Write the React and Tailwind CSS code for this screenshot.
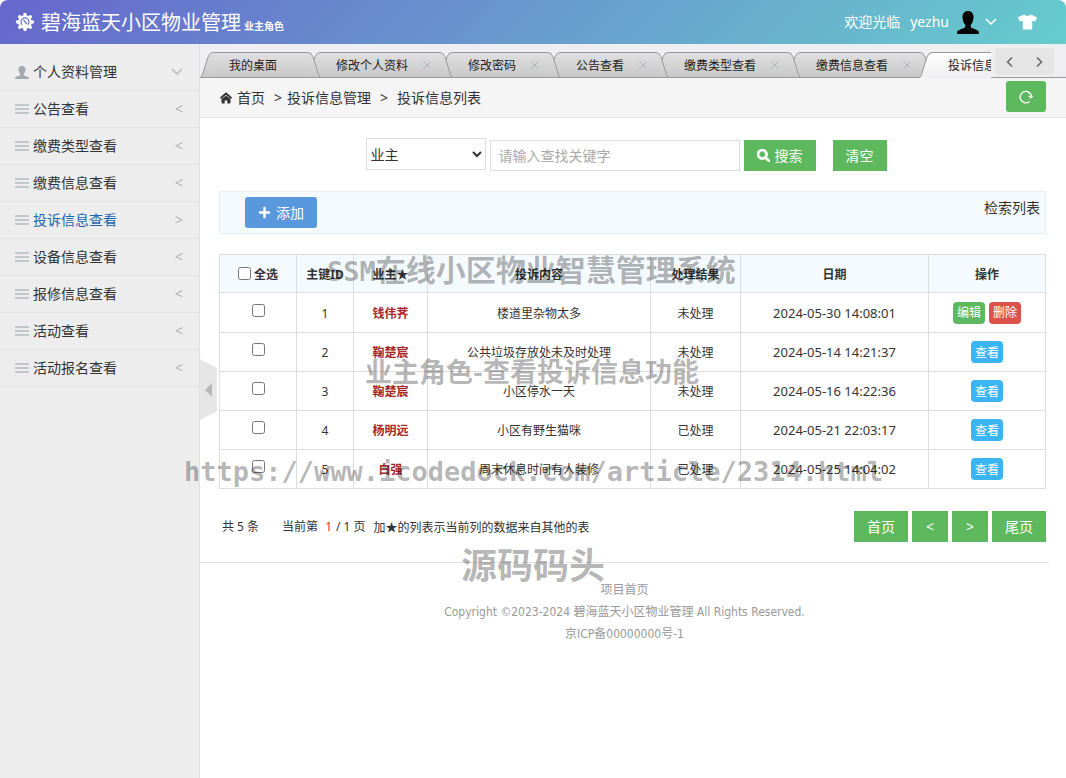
import { FaPlus, FaSearch, FaTshirt } from "react-icons/fa";

const menus = [
    { name: "公告查看" },
    { name: "缴费类型查看" },
    { name: "缴费信息查看" },
    { name: "投诉信息查看", active: true },
    { name: "设备信息查看" },
    { name: "报修信息查看" },
    { name: "活动查看" },
    { name: "活动报名查看" },
];

const tabs = [
    { name: "我的桌面", fixed: true, z: "z-[7]" },
    { name: "修改个人资料", z: "z-[6]" },
    { name: "修改密码", z: "z-[5]" },
    { name: "公告查看", z: "z-[4]" },
    { name: "缴费类型查看", z: "z-[3]" },
    { name: "缴费信息查看", z: "z-[2]" },
    { name: "投诉信息查看", active: true, z: "z-[8]" },
];

const rows = [
    { id: 1, owner: "钱伟荠", content: "楼道里杂物太多", result: "未处理", date: "2024-05-30 14:08:01", own: true },
    { id: 2, owner: "鞠楚宸", content: "公共垃圾存放处未及时处理", result: "未处理", date: "2024-05-14 14:21:37" },
    { id: 3, owner: "鞠楚宸", content: "小区停水一天", result: "未处理", date: "2024-05-16 14:22:36" },
    { id: 4, owner: "杨明远", content: "小区有野生猫咪", result: "已处理", date: "2024-05-21 22:03:17" },
    { id: 5, owner: "白强", content: "周末休息时间有人装修", result: "已处理", date: "2024-05-25 14:04:02" },
];

function GearIcon() {
    return (
        <svg className="h-5 w-5" viewBox="0 0 20 20">
            <g stroke="#fff" strokeWidth="3.4" strokeLinecap="round">
                <path d="M10 2.500v15M2.500 10h15M4.700 4.700l10.600 10.600M15.300 4.700L4.700 15.300" />
            </g>
            <circle cx="10" cy="10" r="6.8" fill="#fff" />
            <path d="M7.200 12.800A4 4 0 1 1 12.800 12.800" fill="none" stroke="#6b74cb" strokeWidth="1.200" />
            <path d="M8.500 8l3.500 4" stroke="#6b74cb" strokeWidth="1.400" />
        </svg>
    );
}

function PersonIcon({ className }) {
    return (
        <svg className={className} viewBox="0 0 22 22" fill="currentColor" preserveAspectRatio="none">
            <path d="M11 0C7.6 0 5.3 2.4 5.5 6c.1 3.400 1.200 5.800 2.700 7.200.5 1.600-.2 2.800-1.700 3.400C3.600 17.600 0 18.300 0 21c0 .7.500 1 1.200 1h19.600c.7 0 1.200-.3 1.200-1 0-2.700-3.600-3.400-6.500-4.400-1.500-.6-2.200-1.800-1.700-3.400 1.500-1.400 2.600-3.800 2.700-7.200C16.700 2.400 14.400 0 11 0z" />
        </svg>
    );
}

function Chevron({ className, d }) {
    return (
        <svg className={className} viewBox="0 0 12 12" fill="none" stroke="currentColor" strokeWidth="1.5">
            <path d={d} />
        </svg>
    );
}

function Star() {
    return <span className="font-['Noto_Sans_CJK_SC',sans-serif]">★</span>;
}

function Tab({ name, fixed, active, z }) {
    const top = active ? "#ffffff" : "#e0e0e0";
    const bottom = active ? "#efeef0" : "#c8c8c8";
    const gradient = `tab-${active ? "on" : "off"}`;
    return (
        <li className={`relative flex h-[26px] shrink-0 items-center pl-[21px] ${fixed ? "pr-[38px]" : "pr-4"} ${z}`}>
            <span className="absolute inset-y-0 -left-2 -right-[6px] flex">
                <svg className="h-[26px] w-4 shrink-0" viewBox="0 0 16 26">
                    <defs>
                        <linearGradient id={gradient} x1="0" y1="0" x2="0" y2="1">
                            <stop offset="0" stopColor={top} />
                            <stop offset="1" stopColor={bottom} />
                        </linearGradient>
                    </defs>
                    <path d="M0 26C2 25 2 24 3 21L8 5Q9.500.5 13 .5H16V26z" fill={`url(#${gradient})`} />
                    <path d="M0 25.500C2 25 2 24 3 21L8 5Q9.500.5 13 .5H16" fill="none" stroke="#999" />
                    {!active && <path d="M0 25.500h16" stroke="#999" />}
                </svg>
                <span
                    className={`h-[26px] flex-1 border-t border-[#999] bg-linear-to-b ${
                        active ? "from-white to-[#efeef0]" : "border-b from-[#e0e0e0] to-[#c8c8c8]"
                    }`}
                ></span>
                <svg className="h-[26px] w-4 shrink-0" viewBox="0 0 16 26">
                    <path d="M16 26C14 25 14 24 13 21L8 5Q6.500.5 3 .5H0V26z" fill={`url(#${gradient})`} />
                    <path d="M16 25.500C14 25 14 24 13 21L8 5Q6.500.5 3 .5H0" fill="none" stroke="#999" />
                    {!active && <path d="M0 25.500h16" stroke="#999" />}
                </svg>
            </span>
            <a href="#" className="relative pt-[2px] text-xs text-[#222]">
                {name}
            </a>
            {!fixed && (
                <button type="button" aria-label={`关闭${name}`} className="relative ml-[15px] text-[#aab2bd]">
                    <svg className="h-2 w-2" viewBox="0 0 8 8" stroke="currentColor">
                        <path d="M.5.5l7 7M7.500.5l-7 7" />
                    </svg>
                </button>
            )}
        </li>
    );
}

function Header() {
    return (
        <header className="flex h-11 shrink-0 items-center rounded-t-lg bg-linear-135 from-[#66c] to-[#6cc] pl-[15px] pr-[29px] text-white">
            <GearIcon />
            <h1 className="ml-[6px] pt-[2px] text-xl">碧海蓝天小区物业管理</h1>
            <span className="ml-[3px] mt-[9px] text-[10px] font-bold">业主角色</span>
            <div className="ml-auto flex items-center text-sm">
                <span>欢迎光临</span>
                <a href="#" className="ml-[10px]">yezhu</a>
                <PersonIcon className="ml-2 h-[23px] w-[22px] text-black" />
                <Chevron className="ml-[6px] h-3 w-3" d="M1 3l5 5 5-5" />
                <button type="button" aria-label="换肤" className="ml-[21px]">
                    <FaTshirt className="h-4 w-[19px]" />
                </button>
            </div>
        </header>
    );
}

function Sidebar() {
    return (
        <aside className="w-[200px] shrink-0 border-r border-[#e2e2e2] bg-[#ededed] pt-[10px] text-sm text-[#333]">
            <a href="#" className="flex h-[37px] items-center border-b border-[#e2e2e2] pl-[15px] pr-4">
                <PersonIcon className="h-[13px] w-[14px] text-[#a0a9b1]" />
                <span className="ml-1">个人资料管理</span>
                <Chevron className="ml-auto h-3 w-3 text-[#b6b7b8]" d="M1 3l5 5 5-5" />
            </a>
            {menus.map((menu) => (
                <a
                    key={menu.name}
                    href="#"
                    className="flex h-[37px] items-center border-b border-[#e2e2e2] pl-[15px] pr-4"
                >
                    <svg className="h-3 w-[14px]" viewBox="0 0 14 12" stroke="#b4babf" strokeWidth="1.600">
                        <path d="M0 2h14M0 6h14M0 10h14" />
                    </svg>
                    <span className={menu.active ? "ml-1 text-[#1c64ad]" : "ml-1"}>{menu.name}</span>
                    <span className="ml-auto text-[#b0b1b2]">{menu.active ? ">" : "<"}</span>
                </a>
            ))}
        </aside>
    );
}

function TabBar() {
    return (
        <nav className="relative flex h-[34px] items-end bg-[#efeef0]">
            <div className="absolute inset-x-0 bottom-0 h-px bg-[#999]"></div>
            <ul className="relative flex min-w-0 flex-1 overflow-hidden pl-2">
                {tabs.map((tab) => (
                    <Tab key={tab.name} {...tab} />
                ))}
            </ul>
            <div className="ml-1 mr-3 mt-1 flex h-[27px] w-[59px] shrink-0 items-center justify-around self-start rounded-[3px] bg-[#e5e5e5] text-[#666]">
                <button type="button" aria-label="向左">
                    <Chevron className="h-3 w-3" d="M8 1.500L3.500 6 8 10.500" />
                </button>
                <button type="button" aria-label="向右">
                    <Chevron className="h-3 w-3" d="M4 1.500L8.500 6 4 10.500" />
                </button>
            </div>
        </nav>
    );
}

function Breadcrumb() {
    return (
        <div className="flex h-10 items-center border-b border-[#e5e5e5] bg-[#f5f5f5] pl-5 pr-5 text-sm text-[#333]">
            <svg className="h-3 w-3" viewBox="0 0 12 12">
                <path d="M1.500 7L6 3.400 10.500 7v3.500a1 1 0 0 1-1 1H7.300V8.500H4.700v3H2.500a1 1 0 0 1-1-1z" fill="#333" />
                <path d="M.4 6.300L6 1.500l5.600 4.800" fill="none" stroke="#333" strokeWidth="1.800" />
            </svg>
            <a href="#" className="ml-[5px]">首页</a>
            <span className="ml-[9px] mr-[5px]">&gt;</span>
            <span>投诉信息管理</span>
            <span className="mx-[9px]">&gt;</span>
            <span>投诉信息列表</span>
            <button
                type="button"
                aria-label="刷新"
                className="mb-[2px] ml-auto flex h-[31px] w-10 items-center justify-center rounded-[3px] bg-[#5eb95e] text-white"
            >
                <svg className="h-[14px] w-[14px]" viewBox="0 0 14 14" fill="none" stroke="currentColor" strokeWidth="1.400">
                    <path d="M10.500 11.500A5.700 5.700 0 1 1 12.500 6.500" />
                    <path d="M9.500 6.200h4.300L12 8.500z" fill="currentColor" strokeWidth=".5" />
                </svg>
            </button>
        </div>
    );
}

function SearchForm() {
    return (
        <form className="flex justify-center pr-[13px] text-sm">
            <select
                aria-label="查找字段"
                className="mr-1 h-8 w-[120px] border border-[#ddd] bg-white text-sm text-[#333]"
            >
                <option>业主</option>
            </select>
            <input
                type="text"
                aria-label="查找关键字"
                placeholder="请输入查找关键字"
                className="mt-[2px] h-[31px] w-[250px] border border-[#ddd] px-2 placeholder:text-[#aaa]"
            />
            <button type="button" className="ml-1 mt-[2px] flex h-[31px] items-center bg-[#5eb95e] px-[13px] text-white">
                <FaSearch className="mr-[5px] h-[13px] w-[13px]" stroke="currentColor" strokeWidth="30" />
                搜索
            </button>
            <button type="reset" className="ml-[17px] mt-[2px] h-[31px] bg-[#5eb95e] px-[13px] text-white">
                清空
            </button>
        </form>
    );
}

function DataTable() {
    const cell = "border border-[#ddd] pt-[2px]";
    return (
        <table className="mt-5 w-full table-fixed border-collapse text-center text-xs text-[#333]">
            <colgroup>
                <col className="w-[77px]" />
                <col className="w-[57px]" />
                <col className="w-[74px]" />
                <col />
                <col className="w-[90px]" />
                <col className="w-[188px]" />
                <col className="w-[117px]" />
            </colgroup>
            <thead>
                <tr className="h-[38px] bg-[#f5fafe]">
                    <th className={cell}>
                        <label className="flex items-center justify-center gap-[3px]">
                            <input type="checkbox" className="mb-[2px] h-[13px] w-[13px]" />
                            全选
                        </label>
                    </th>
                    <th className={cell}>主键ID</th>
                    <th className={cell}>
                        业主<Star />
                    </th>
                    <th className={cell}>投诉内容</th>
                    <th className={cell}>处理结果</th>
                    <th className={cell}>日期</th>
                    <th className={cell}>操作</th>
                </tr>
            </thead>
            <tbody>
                {rows.map((row) => (
                    <tr key={row.id} className="h-[39px] first:h-10">
                        <td className="border border-[#ddd]">
                            <input type="checkbox" aria-label={`选择${row.id}`} className="mx-auto mb-[5px] block h-[13px] w-[13px]" />
                        </td>
                        <td className={cell}>{row.id}</td>
                        <td className={`${cell} font-bold text-[#a52a2a]`}>{row.owner}</td>
                        <td className={cell}>{row.content}</td>
                        <td className={cell}>{row.result}</td>
                        <td className={`${cell} text-[13px]`}>{row.date}</td>
                        <td className="border border-[#ddd]">
                            <div className="flex justify-center gap-1 text-white">
                                {row.own ? (
                                    <>
                                        <button type="button" className="h-[22px] rounded bg-[#5eb95e] px-1 pt-px">编辑</button>
                                        <button type="button" className="h-[22px] rounded bg-[#dd514c] px-1 pt-px">删除</button>
                                    </>
                                ) : (
                                    <button type="button" className="h-[22px] rounded bg-[#3bb4f2] px-1 pt-px">查看</button>
                                )}
                            </div>
                        </td>
                    </tr>
                ))}
            </tbody>
        </table>
    );
}

function Pagination() {
    return (
        <div className="mt-[22px] flex items-center text-xs text-[#333]">
            <div className="flex pt-[2px]">
                <span className="ml-[3px]">共 5 条</span>
                <span className="ml-[23px]">当前第</span>
                <span className="ml-[7px] text-[#e33]">1</span>
                <span className="ml-1">/ 1 页</span>
                <span className="ml-2">
                    加<Star />的列表示当前列的数据来自其他的表
                </span>
            </div>
            <div className="ml-auto flex gap-1 text-sm text-white">
                <button type="button" className="h-[31px] bg-[#5eb95e] px-[13px]">首页</button>
                <button type="button" className="h-[31px] w-9 bg-[#5eb95e]">&lt;</button>
                <button type="button" className="h-[31px] w-9 bg-[#5eb95e]">&gt;</button>
                <button type="button" className="h-[31px] bg-[#5eb95e] px-[13px]">尾页</button>
            </div>
        </div>
    );
}

// translucent marks that lie over the whole window
function Watermarks() {
    return (
        <div className="pointer-events-none absolute inset-0 z-20 overflow-hidden whitespace-nowrap font-['Noto_Sans_CJK_SC',sans-serif] font-bold text-black/30">
            <p className="absolute left-[327px] top-[248px] text-[30px] leading-10">
                <span className="font-['DejaVu_Sans_Mono',monospace] text-[27px]">SSM</span>在线小区物业智慧管理系统
            </p>
            <p className="absolute left-[365px] top-[351px] text-[27px] leading-10">业主角色-查看投诉信息功能</p>
            <p className="absolute left-[184px] top-[452px] font-['DejaVu_Sans_Mono',monospace] text-[27px] leading-10">
                https://www.icodedock.com/article/2314.html
            </p>
            <p className="absolute left-[461px] top-[543px] text-[36px] leading-10">源码码头</p>
        </div>
    );
}

export default function App() {
    return (
        <div className="relative flex min-h-screen flex-col bg-white font-['Noto_Sans','Noto_Sans_CJK_SC',sans-serif]">
            <Header />
            <div className="flex flex-1">
                <Sidebar />
                <main className="relative min-w-0 flex-1">
                    <TabBar />
                    <Breadcrumb />
                    <button type="button" aria-label="收起菜单" className="absolute left-0 top-[315px]">
                        <svg className="h-[61px] w-[17px]" viewBox="0 0 17 61">
                            <path d="M0 0l17 9v43L0 61z" fill="#e6e6e6" />
                            <path d="M12 24v14l-7-7z" fill="#b8b8b8" />
                        </svg>
                    </button>
                    <div className="pl-[19px] pr-5 pt-5">
                        <SearchForm />
                        <div className="mt-5 flex h-[43px] items-start justify-between border border-[#e8eef2] bg-[#f5fafe] pl-[25px] pr-[5px] pt-[5px] text-sm text-[#333]">
                            <button type="button" className="flex h-[31px] items-center rounded-[3px] bg-[#5a98de] px-[13px] text-white">
                                <FaPlus className="mr-[5px] h-[13px] w-[13px]" />
                                添加
                            </button>
                            <span className="pt-px">检索列表</span>
                        </div>
                        <DataTable />
                        <Pagination />
                    </div>
                    <footer className="mr-[17px] mt-5 border-t border-[#e5e5e5] pt-4 text-center font-['DejaVu_Sans_Condensed','DejaVu_Sans','Noto_Sans_CJK_SC',sans-serif] text-xs leading-[22px] text-[#999]">
                        <p>项目首页</p>
                        <p>Copyright ©2023-2024 碧海蓝天小区物业管理 All Rights Reserved.</p>
                        <p>京ICP备00000000号-1</p>
                    </footer>
                </main>
            </div>
            <Watermarks />
        </div>
    );
}
